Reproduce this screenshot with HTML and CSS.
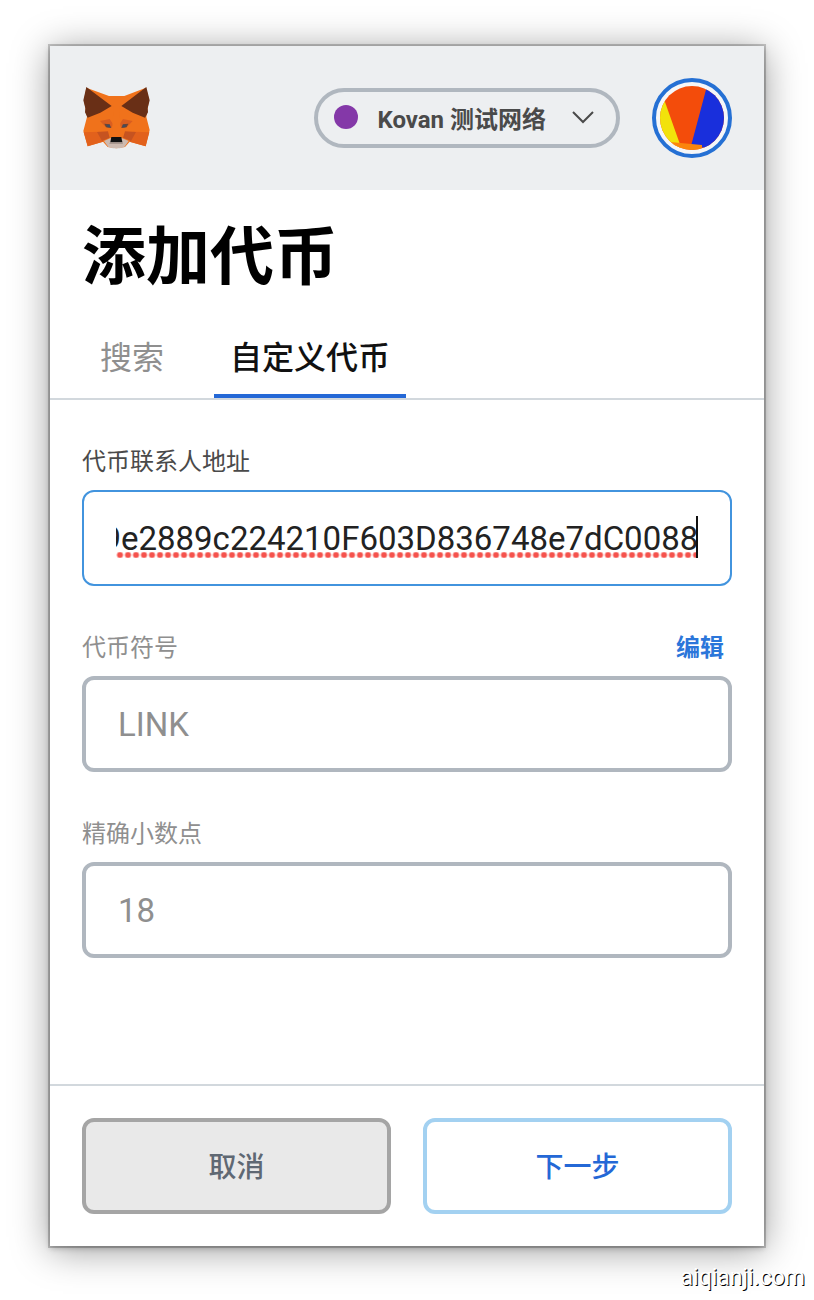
FILE: index.html
```html
<!DOCTYPE html>
<html lang="zh-CN">
<head>
<meta charset="utf-8">
<meta name="viewport" content="width=device-width, initial-scale=1">
<title>添加代币</title>
<link rel="stylesheet" href="styles.css">
</head>
<body>
<main class="card">
  <header class="topbar">
    <svg class="fox" viewBox="40 36 201 186" aria-hidden="true">
      <path fill="#f0721b" d="M50 38L118 63H164L229 38L238 74L230 126L240 165L228 214L180 200L166 216L140 220L114 216L100 200L54 214L41 168L52 126L43 76Z"/>
      <path fill="#692f16" d="M50 36L126 93L92 113L54 128L46 112L47 100L41 76ZM230 36L155 93L189 113L226 128L235 112L234 100L240 76Z"/>
      <path fill="#e2611c" d="M42 172L90 170L100 200L54 214ZM239 172L192 170L180 200L228 214Z"/>
      <path fill="#c65320" d="M82 171L115 169L120 188L97 198ZM199 171L166 169L160 188L184 198Z"/>
      <path fill="#d95e20" d="M91 138L120 132L132 150L124 159L106 154ZM189 138L160 132L148 150L156 159L174 154Z"/>
      <path fill="#67463a" d="M104 146L120 148L125 159L109 157ZM176 146L160 148L155 159L171 157Z"/>
      <path fill="#3e4d64" d="M113 149h8v8h-8zM159 149h8v8h-8z"/>
      <path fill="#f0721b" d="M132 93L149 93L154 184L126 184Z"/>
      <path fill="#cdbab0" d="M103 198L121 190H158L177 198L164 216L150 220H130L116 216Z"/>
      <path fill="#111" d="M125 186H155L158 202H122Z"/>
      <path fill="#9c8d86" d="M121 202H158L160 206H119Z"/>
    </svg>
    <button class="network" type="button">
      <span class="network-dot"></span>
      <span class="network-name">Kovan 测试网络</span>
      <svg class="chevron" viewBox="0 0 22 14" aria-hidden="true"><path d="M1 2L11 12L21 2"/></svg>
    </button>
    <button class="account" type="button" aria-label="账户">
      <svg class="identicon" viewBox="0 0 64 64" aria-hidden="true">
        <clipPath id="round"><circle cx="32" cy="32" r="32"/></clipPath>
        <g clip-path="url(#round)">
          <path fill="#f34c0b" d="M0 0H64V64H0Z"/>
          <path fill="#f2e20b" d="M0 8L5 16L22 64H0Z"/>
          <path fill="#192fdc" d="M47 0L31 60L64 64V0Z"/>
          <path fill="#fb850d" d="M10 56L42 59V64H10Z"/>
        </g>
      </svg>
    </button>
  </header>
  <h1 class="title">添加代币</h1>
  <nav class="tabs">
    <button class="tab" type="button">搜索</button>
    <button class="tab tab-active" type="button">自定义代币</button>
  </nav>
  <form class="form" id="token-form">
    <div class="field">
      <div class="label-row"><label class="label label-dark" for="address">代币联系人地址</label></div>
      <div class="address-box">
        <input class="input input-focus" id="address" type="text" spellcheck="false" value="0xa36085F69e2889c224210F603D836748e7dC0088">
      </div>
    </div>
    <div class="field">
      <div class="label-row">
        <label class="label" for="symbol">代币符号</label>
        <a class="edit" href="#symbol">编辑</a>
      </div>
      <input class="input" id="symbol" type="text" value="LINK" disabled>
    </div>
    <div class="field">
      <div class="label-row"><label class="label" for="decimals">精确小数点</label></div>
      <input class="input" id="decimals" type="text" value="18" disabled>
    </div>
  </form>
  <footer class="actions">
    <button class="btn btn-cancel" type="button">取消</button>
    <button class="btn btn-next" type="submit" form="token-form">下一步</button>
  </footer>
</main>
<div class="watermark">aiqianji.com</div>
<script src="main.js"></script>
</body>
</html>
```
FILE: styles.css
```css
* { box-sizing: border-box; }

body {
  margin: 0;
  min-height: 100vh;
  padding: 46px 50px 54px;
  display: flex;
  position: relative;
  background: #fff;
  font-family: Roboto, "Noto Sans CJK SC", sans-serif;
}

button, input { font-family: inherit; }
button { cursor: pointer; }

.card {
  flex: 1;
  min-width: 0;
  display: flex;
  flex-direction: column;
  background: #fff;
  box-shadow: 0 0 0 2px rgba(0, 0, 0, .2), 0 2px 6px rgba(0, 0, 0, .25), 0 4px 36px rgba(0, 0, 0, .4);
}

.topbar {
  display: flex;
  align-items: center;
  gap: 32px;
  padding: 32px;
  background: #edeff1;
}

.fox { width: 67px; height: 62px; margin-right: auto; margin-left: 1px; }

.network {
  display: flex;
  align-items: center;
  height: 60px;
  padding: 0 22px 2px 16px;
  border: 4px solid #b0b7bf;
  border-radius: 30px;
  background: transparent;
  color: #4a4a4a;
  font-size: 24px;
  font-weight: 700;
}
.network-dot { width: 24px; height: 24px; border-radius: 50%; background: #8438a8; }
.network-name { margin: 0 26px 0 19px; }
.chevron { width: 22px; height: 14px; fill: none; stroke: #4a4a4a; stroke-width: 2; }

.account {
  width: 80px;
  height: 80px;
  padding: 4px;
  border: 4px solid #2570d4;
  border-radius: 50%;
  background: #f5f6f8;
}
.identicon { display: block; width: 64px; height: 64px; }

.title {
  margin: 0;
  padding: 24px 32px 0;
  font-size: 64px;
  line-height: 88px;
  font-weight: 700;
  color: #000;
}

.tabs {
  display: flex;
  gap: 32px;
  padding: 14px 32px 0;
  border-bottom: 2px solid #d2d8dd;
}
.tab {
  min-width: 100px;
  height: 82px;
  padding: 0 16px;
  border: 0;
  border-bottom: 4px solid transparent;
  background: transparent;
  font-size: 32px;
  color: #8f8f8f;
}
.tab-active { border-bottom-color: #2468d6; color: #111; font-weight: 500; }

.form { flex: 1; padding: 46px 32px 0; }
.field { margin-bottom: 46px; }
.label-row {
  display: flex;
  justify-content: space-between;
  padding-right: 8px;
  margin-bottom: 12px;
  font-size: 24px;
  line-height: 32px;
}
.label { color: #8f8f8f; }
.label-dark { color: #4a4a4a; }
.edit { color: #2b76da; font-weight: 700; text-decoration: none; }

.input {
  display: block;
  width: 100%;
  height: 96px;
  padding: 0 30px 0 32px;
  border: 4px solid #b0b7bf;
  border-radius: 12px;
  outline: 0;
  background: #fff;
  font-size: 33px;
  color: #8f8f8f;
}
.input-focus {
  padding: 0 32px;
  border: 2px solid #4294de;
  color: #222;
  caret-color: transparent;
}

/* Spelling marks and text cursor laid over the address text */
.address-box { position: relative; }
.address-box::before {
  content: "";
  position: absolute;
  left: 34px;
  right: 36px;
  top: 62px;
  height: 6px;
  background: radial-gradient(circle at 4px 3px, #f5524c 2px, transparent 4px) 0 0 / 8px 6px repeat-x;
}
.address-box::after {
  content: "";
  position: absolute;
  right: 34px;
  top: 26px;
  width: 2px;
  height: 42px;
  background: #111;
}

.actions {
  display: flex;
  gap: 32px;
  padding: 32px;
  border-top: 2px solid #d2d8dd;
}
.btn {
  flex: 1;
  height: 96px;
  padding-bottom: 4px;
  border: 4px solid;
  border-radius: 12px;
  font-size: 28px;
  font-weight: 500;
}
.btn-cancel { border-color: #a5a5a5; background: #e9e9e9; color: #5f6873; }
.btn-next { border-color: #a3d1f1; background: #fff; color: #2468d6; }

.watermark {
  position: absolute;
  right: 9px;
  bottom: 8px;
  font-size: 23px;
  line-height: 28px;
  color: #fff;
  text-shadow: 1px 1px 0 #000;
}
```
FILE: main.js
```js
const address = document.getElementById('address');
address.scrollLeft = address.scrollWidth;
```
